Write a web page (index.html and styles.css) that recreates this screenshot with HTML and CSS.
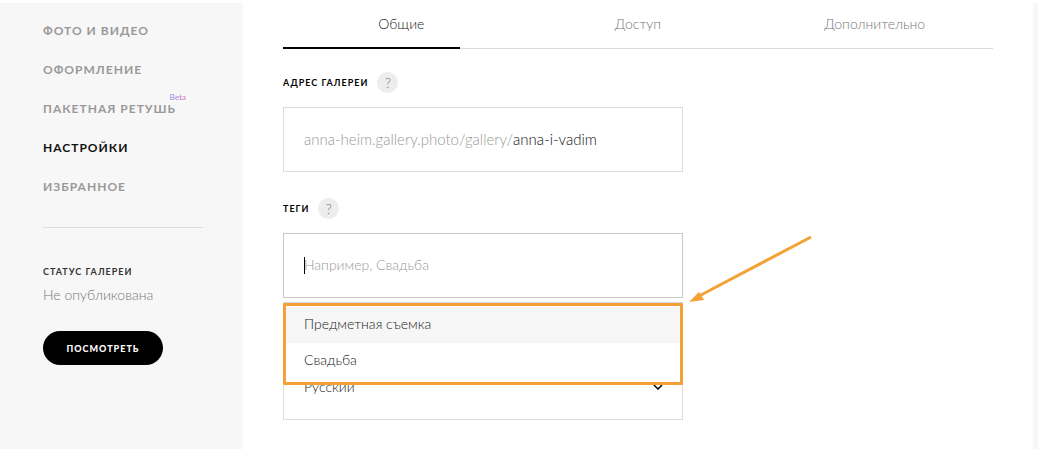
FILE: index.html
```html
<!DOCTYPE html>
<html lang="ru">

<head>
    <meta charset="UTF-8">
    <meta name="viewport" content="width=device-width, initial-scale=1.0">
    <title>Настройки галереи</title>
    <link rel="stylesheet" href="styles.css">
</head>

<body>

    <div class="page">
        <aside class="sidebar">
            <nav class="menu">
                <a href="#photos">Фото и видео</a>
                <a href="#design">Оформление</a>
                <a href="#retouch">Пакетная ретушь<span class="beta">Beta</span></a>
                <a href="#settings" class="active">Настройки</a>
                <a href="#favorites">Избранное</a>
            </nav>
            <div class="status">
                <div class="status-title">Статус галереи</div>
                <div class="status-value">Не опубликована</div>
                <button type="button" class="view-button">Посмотреть</button>
            </div>
        </aside>

        <main class="content">
            <nav class="tabs">
                <a href="#general" class="active">Общие</a>
                <a href="#access">Доступ</a>
                <a href="#extra">Дополнительно</a>
            </nav>

            <form class="settings-form">
                <div class="field">
                    <div class="field-header">
                        <label for="address">Адрес галереи</label>
                        <button type="button" class="help">?</button>
                    </div>
                    <div class="field-box address-box">
                        <span class="prefix">anna-heim.gallery.photo/gallery/</span>
                        <input type="text" id="address" value="anna-i-vadim">
                    </div>
                </div>

                <div class="field">
                    <div class="field-header">
                        <label for="tags">Теги</label>
                        <button type="button" class="help">?</button>
                    </div>
                    <div class="tags-box">
                        <input type="text" id="tags" class="field-box tags-input" placeholder="Например, Свадьба">
                        <div class="dropdown">
                            <ul class="dropdown-list">
                                <li class="selected">Предметная съемка</li>
                                <li>Свадьба</li>
                            </ul>
                        </div>
                        <svg class="arrow" width="124" height="68" viewBox="0 0 124 68">
                            <path d="M10 61L122 2" stroke="#f4a137" stroke-width="3" fill="none" />
                            <path d="M0 67L10 57L15 65Z" fill="#f4a137" />
                        </svg>
                    </div>
                </div>

                <div class="field language">
                    <div class="select-box">
                        <select id="language" class="field-box" aria-label="Язык">
                            <option>Русский</option>
                        </select>
                        <svg class="chevron" width="10" height="6" viewBox="0 0 10 6">
                            <path d="M1 1L5 5L9 1" stroke="#000" stroke-width="1.5" fill="none" />
                        </svg>
                    </div>
                </div>
            </form>
        </main>
    </div>

</body>

</html>
```

FILE: styles.css
```css
* {
    box-sizing: border-box;
}

body {
    font-family: Lato, 'Open Sans', sans-serif;
    font-size: 14px;
    font-weight: 300;
    color: #222;
    margin: 0;
    padding-top: 3px;
}

a {
    text-decoration: none;
}

.page {
    display: flex;
    min-height: calc(100vh - 3px);
    background-color: #f7f7f7;
    padding-right: 5px;
}

.sidebar {
    width: 243px;
    flex-shrink: 0;
    padding: 20px 40px 20px 43px;
}

.menu {
    display: flex;
    flex-direction: column;
    align-items: flex-start;
    gap: 23px;
    padding-bottom: 32px;
    border-bottom: 1px solid #dcdcdc;
}

.menu a {
    position: relative;
    font-size: 12px;
    font-weight: 700;
    line-height: 16px;
    letter-spacing: 1px;
    text-transform: uppercase;
    white-space: nowrap;
    color: #999;
}

.menu a.active {
    color: #111;
}

.beta {
    position: absolute;
    right: -10px;
    top: -9px;
    font-size: 8px;
    font-weight: 400;
    line-height: 10px;
    letter-spacing: 0;
    text-transform: none;
    color: transparent;
    background: linear-gradient(90deg, #8a7bf0, #d667b5);
    background-clip: text;
    -webkit-background-clip: text;
}

.status {
    padding-top: 38px;
}

.status-title {
    font-size: 9px;
    font-weight: 700;
    line-height: 12px;
    letter-spacing: 1px;
    text-transform: uppercase;
    color: #333;
}

.status-value {
    margin-top: 7px;
    line-height: 20px;
    color: #777;
}

.view-button {
    width: 120px;
    height: 34px;
    margin-top: 26px;
    padding: 0;
    border: none;
    border-radius: 17px;
    background-color: #000;
    color: #fff;
    font-family: inherit;
    font-size: 9px;
    font-weight: 900;
    letter-spacing: 1px;
    text-transform: uppercase;
    cursor: pointer;
}

.content {
    flex: 1;
    background-color: #fff;
    padding: 0 40px 29px;
}

.tabs {
    display: grid;
    grid-template-columns: repeat(3, 1fr);
    border-bottom: 1px solid #dcdcdc;
}

.tabs a {
    position: relative;
    padding: 11px 0 14px;
    line-height: 20px;
    text-align: center;
    color: #777;
}

.tabs a.active {
    color: #222;
}

.tabs a.active::after {
    content: '';
    position: absolute;
    left: 0;
    bottom: -1px;
    width: 75%;
    height: 2px;
    background-color: #000;
}

.settings-form {
    max-width: 400px;
    padding-top: 23px;
}

.field {
    margin-bottom: 26px;
}

.field-header {
    display: flex;
    align-items: center;
    gap: 9px;
    margin-bottom: 14px;
}

.field-header label {
    font-size: 9px;
    font-weight: 700;
    line-height: 21px;
    letter-spacing: 1px;
    text-transform: uppercase;
    color: #000;
}

.help {
    width: 21px;
    height: 21px;
    padding: 0;
    border: none;
    border-radius: 50%;
    background-color: #ededed;
    color: #777;
    font-family: inherit;
    font-size: 14px;
    font-weight: 300;
    line-height: 21px;
    cursor: pointer;
}

.field-box {
    display: block;
    width: 100%;
    height: 65px;
    padding: 0 20px 2px;
    border: 1px solid #dcdcdc;
    border-radius: 0;
    background-color: #fff;
    font-family: inherit;
    font-size: 14px;
    font-weight: 300;
    color: #222;
    outline: none;
}

.address-box {
    display: flex;
    align-items: center;
    font-size: 15px;
}

.prefix {
    color: #999;
}

.address-box input {
    flex: 1;
    min-width: 0;
    padding: 0;
    border: none;
    background: none;
    font: inherit;
    color: #111;
    outline: none;
}

.tags-box,
.select-box {
    position: relative;
}

/* text cursor at the start of the empty field */
.tags-input {
    border-color: #c8c8c8;
    background: linear-gradient(#000, #000) 20px center / 1px 17px no-repeat #fff;
}

.tags-input::placeholder {
    color: #999;
    opacity: 1;
}

.dropdown {
    position: absolute;
    z-index: 10;
    top: calc(100% + 4px);
    left: 0;
    width: 100%;
    border-top: 1px solid #d3d8dc;
    background-color: #fff;
}

.dropdown-list {
    list-style: none;
    margin: 0;
    padding: 1px 0 3px;
    border: 3px solid #f4a137;
    border-radius: 1px;
}

.dropdown-list li {
    padding: 0 18px 2px;
    line-height: 34px;
}

.dropdown-list li.selected {
    background-color: #f6f6f6;
}

.arrow {
    position: absolute;
    left: calc(100% + 6px);
    top: 2px;
}

.language {
    margin: 0;
    padding-top: 31px;
}

.language select {
    appearance: none;
    -webkit-appearance: none;
}

.chevron {
    position: absolute;
    right: 20px;
    top: 29px;
}
```
